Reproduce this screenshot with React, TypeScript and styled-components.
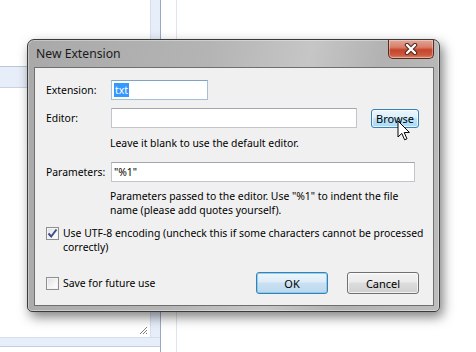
import styled, { createGlobalStyle } from "styled-components";

const GlobalStyle = createGlobalStyle`
  html, body {
    margin: 0;
    padding: 0;
    overflow: hidden;
    background: #ffffff;
  }
  * {
    box-sizing: border-box;
  }
`;

const Desktop = styled.div`
  position: relative;
  width: 476px;
  height: 352px;
  overflow: hidden;
  display: flex;
  background: #ffffff;
  font-family: "Noto Sans", "Open Sans", sans-serif;
  font-size: 10.4px;
  color: #000000;
  white-space: nowrap;
`;

/* ---- the application behind the dialog ---- */

const BackLeft = styled.div`
  width: 161px;
  display: flex;
  flex-direction: column;
  border-right: 1px solid #9aa9bf;
`;

const BackRow = styled.div`
  height: 337px;
  display: flex;
`;

const BackMain = styled.div`
  flex: 1;
  display: flex;
  flex-direction: column;
`;

const BackTop = styled.div`
  height: 66px;
`;

const BackBand = styled.div`
  height: 22px;
  background: #e7eef9;
  border-top: 1px solid #b9c6d8;
  border-bottom: 1px solid #c9d4e3;
`;

const BackBody = styled.div`
  flex: 1;
  display: flex;
  align-items: flex-end;
  justify-content: flex-end;
  padding: 0 2px 2px 0;
`;

const BackStrip = styled.div`
  width: 10px;
  background: #e6eefa;
  border-left: 1px solid #d4deec;
`;

const BackBottom = styled.div`
  height: 10px;
  background: #e6eefa;
  border-top: 1px solid #d4deec;
  border-bottom: 1px solid #c3cfe0;
`;

const BackGap = styled.div`
  width: 15px;
`;

const BackLine = styled.div`
  width: 1px;
  background: #dfe5ee;
`;

const Grip = () => (
  <svg width="10" height="10" viewBox="0 0 10 10">
    <path d="M9 2 L2 9 M9 5 L5 9 M9 8 L8 9" stroke="#7d7d7d" strokeWidth="1" />
  </svg>
);

/* ---- the dialog window ---- */

const Window = styled.div`
  position: absolute;
  left: 27px;
  top: 39px;
  width: 413px;
  height: 273px;
  border: 1px solid #3b3b3b;
  border-radius: 7px 7px 5px 5px;
  background: linear-gradient(
    100deg,
    #a9a9a9 0%,
    #b4b4b4 40%,
    #c6c6c6 62%,
    #b2b2b2 78%,
    #bdbdbd 100%
  );
  box-shadow: 3px 5px 12px rgba(0, 0, 0, 0.5), inset 0 0 0 1px rgba(255, 255, 255, 0.35);
  display: flex;
  flex-direction: column;
  padding: 0 5px 5px 6px;
`;

const TitleBar = styled.div`
  height: 27px;
  display: flex;
  align-items: flex-start;
  justify-content: space-between;
`;

const Title = styled.div`
  padding: 5px 0 0 2px;
  font-size: 12.2px;
  color: #1a1a1a;
`;

const CloseButton = styled.div`
  width: 46px;
  height: 19px;
  border: 1px solid #5a2a22;
  border-top: none;
  border-radius: 0 0 5px 5px;
  background: linear-gradient(
    180deg,
    #e2a697 0%,
    #d87f6a 40%,
    #c4442c 55%,
    #cc5a3e 85%,
    #e08a6c 100%
  );
  box-shadow: inset 0 0 0 1px rgba(255, 255, 255, 0.35);
  display: flex;
  align-items: center;
  justify-content: center;
`;

const CloseGlyph = () => (
  <svg width="14" height="12" viewBox="0 0 14 12">
    <path d="M3 2 L11 10 M11 2 L3 10" stroke="#4a2a25" strokeWidth="4.4" strokeLinecap="round" />
    <path d="M3 2 L11 10 M11 2 L3 10" stroke="#ffffff" strokeWidth="2.4" strokeLinecap="round" />
  </svg>
);

const Client = styled.div`
  position: relative;
  flex: 1;
  border: 1px solid #6f6f6f;
  background: #f0f0f0;
  padding: 12px 14px 0 11px;
  display: flex;
  flex-direction: column;
`;

const FieldRow = styled.div<{ $gap?: number }>`
  display: flex;
  align-items: center;
  margin-bottom: ${(p) => p.$gap ?? 0}px;
`;

const Label = styled.div`
  width: 65px;
  flex: none;
`;

const TextBox = styled.div<{ $width: number; $focused?: boolean }>`
  width: ${(p) => p.$width}px;
  height: 20px;
  background: #ffffff;
  border: 1px solid ${(p) => (p.$focused ? "#a6bfd9" : "#c2c6cc")};
  border-top-color: ${(p) => (p.$focused ? "#7ea3c8" : "#a3a7ad")};
  display: flex;
  align-items: center;
  padding-left: 2px;
  white-space: pre;
`;

const Selected = styled.span`
  background: #3399ff;
  color: #ffffff;
  padding: 0 1px;
`;

const Hint = styled.div<{ $gap: number }>`
  margin-left: 64px;
  line-height: 14px;
  margin-bottom: ${(p) => p.$gap}px;
`;

const Button = styled.div<{ $variant?: "hot" | "default"; $width: number; $height: number }>`
  width: ${(p) => p.$width}px;
  height: ${(p) => p.$height}px;
  flex: none;
  border-radius: 3px;
  border: 1px solid ${(p) => (p.$variant ? "#3c7fb1" : "#707070")};
  background: ${(p) =>
    p.$variant === "hot"
      ? "linear-gradient(180deg, #eaf6fd 0%, #d9f0fc 45%, #bee6fd 50%, #a7d9f5 100%)"
      : p.$variant === "default"
      ? "linear-gradient(180deg, #edf6fc 0%, #dcecf7 45%, #c9e0f1 50%, #bcd8ee 100%)"
      : "linear-gradient(180deg, #f2f2f2 0%, #ebebeb 45%, #dddddd 50%, #cfcfcf 100%)"};
  box-shadow: inset 0 0 0 1px
    ${(p) => (p.$variant === "default" ? "rgba(120, 200, 240, 0.8)" : "rgba(255, 255, 255, 0.7)")};
  display: flex;
  align-items: center;
  justify-content: center;
  font-size: 11px;
`;

const CheckRow = styled.div<{ $gap: number }>`
  display: flex;
  align-items: flex-start;
  margin-bottom: ${(p) => p.$gap}px;
`;

const Box = styled.div`
  width: 13px;
  height: 13px;
  flex: none;
  margin-top: 1px;
  margin-right: 4px;
  border: 1px solid #8e8f8f;
  background: linear-gradient(135deg, #dedede 0%, #f6f6f6 60%, #ffffff 100%);
  box-shadow: inset 0 0 0 1px #f4f4f4;
  display: flex;
  align-items: center;
  justify-content: center;
`;

const CheckText = styled.div`
  line-height: 14px;
`;

const Footer = styled.div`
  display: flex;
  align-items: center;
`;

const FooterSpacer = styled.div`
  flex: 1;
`;

const Gap = styled.div<{ $w: number }>`
  width: ${(p) => p.$w}px;
  flex: none;
`;

const Pointer = styled.svg`
  position: absolute;
  left: 362px;
  top: 52px;
`;

const Check = () => (
  <svg width="11" height="11" viewBox="0 0 11 11">
    <path d="M1.5 5.5 L4.2 8.5 L9.5 1.5" fill="none" stroke="#3b4f8c" strokeWidth="2" />
  </svg>
);

const App = () => {
  return (
    <>
      <GlobalStyle />
      <Desktop>
        <BackLeft>
          <BackRow>
            <BackMain>
              <BackTop />
              <BackBand />
              <BackBody>
                <Grip />
              </BackBody>
            </BackMain>
            <BackStrip />
          </BackRow>
          <BackBottom />
        </BackLeft>
        <BackGap />
        <BackLine />

        <Window>
          <TitleBar>
            <Title>New Extension</Title>
            <CloseButton>
              <CloseGlyph />
            </CloseButton>
          </TitleBar>
          <Client>
            <FieldRow $gap={8}>
              <Label>Extension:</Label>
              <TextBox $width={97} $focused>
                <Selected>txt</Selected>
              </TextBox>
            </FieldRow>
            <FieldRow $gap={8}>
              <Label>Editor:</Label>
              <TextBox $width={247} />
              <Gap $w={14} />
              <Button $variant="hot" $width={48} $height={19}>
                Browse
              </Button>
            </FieldRow>
            <Hint $gap={12}>Leave it blank to use the default editor.</Hint>
            <FieldRow $gap={7}>
              <Label>Parameters:</Label>
              <TextBox $width={304}>"%1"</TextBox>
            </FieldRow>
            <Hint $gap={9}>
              Parameters passed to the editor. Use "%1" to indent the file
              <br />
              name (please add quotes yourself).
            </Hint>
            <CheckRow $gap={18}>
              <Box>
                <Check />
              </Box>
              <CheckText>
                Use UTF-8 encoding (uncheck this if some characters cannot be processed
                <br />
                correctly)
              </CheckText>
            </CheckRow>
            <Footer>
              <Box>
                <span />
              </Box>
              <CheckText>Save for future use</CheckText>
              <FooterSpacer />
              <Button $variant="default" $width={72} $height={22}>
                OK
              </Button>
              <Gap $w={19} />
              <Button $width={72} $height={22}>
                Cancel
              </Button>
            </Footer>
            <Pointer width="14" height="22" viewBox="0 0 14 22">
              <path
                d="M1 1 L1 17 L4.8 13.4 L7.6 19.8 L10 18.8 L7.2 12.6 L12.4 12.4 Z"
                fill="#ffffff"
                stroke="#000000"
                strokeWidth="1"
                strokeLinejoin="round"
              />
            </Pointer>
          </Client>
        </Window>
      </Desktop>
    </>
  );
};

export default App;
